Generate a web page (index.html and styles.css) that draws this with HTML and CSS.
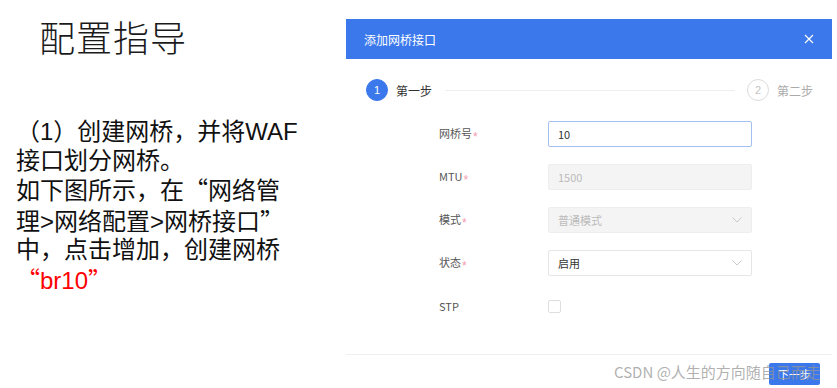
FILE: index.html
```html
<!DOCTYPE html>
<html lang="zh-CN">
<head>
<meta charset="utf-8">
<title>配置指导</title>
<link rel="stylesheet" href="styles.css">
</head>
<body>
<div class="page">
  <section class="guide">
    <h1 class="guide-title">配置指导</h1>
    <p class="guide-text">（1）创建网桥，并将WAF<br>接口划分网桥。<br>如下图所示，在<span class="q">“</span>网络管<br>理&gt;网络配置&gt;网桥接口<span class="q">”</span><br>中，点击增加，创建网桥<br><span class="red"><span class="q">“</span>br10<span class="q">”</span></span></p>
  </section>
  <section class="dialog">
    <header class="dlg-head">
      <span class="dlg-title">添加网桥接口</span>
      <svg class="dlg-close" width="10" height="10" viewBox="0 0 10 10"><path d="M1 1L9 9M9 1L1 9" stroke="#fff" stroke-width="1.2" fill="none"/></svg>
    </header>
    <div class="steps">
      <span class="step-dot active">1</span>
      <span class="step-label">第一步</span>
      <span class="step-line"></span>
      <span class="step-dot">2</span>
      <span class="step-label muted">第二步</span>
    </div>
    <div class="form">
      <div class="row">
        <span class="label">网桥号<i class="req">*</i></span>
        <div class="control focus">10</div>
      </div>
      <div class="row">
        <span class="label">MTU<i class="req">*</i></span>
        <div class="control disabled">1500</div>
      </div>
      <div class="row">
        <span class="label">模式<i class="req">*</i></span>
        <div class="control disabled select">普通模式<svg class="chev" width="10" height="6" viewBox="0 0 10 6"><path d="M0.5 0.5L5 5L9.5 0.5" stroke="#c8c8c8" fill="none"/></svg></div>
      </div>
      <div class="row">
        <span class="label">状态<i class="req">*</i></span>
        <div class="control select">启用<svg class="chev" width="10" height="6" viewBox="0 0 10 6"><path d="M0.5 0.5L5 5L9.5 0.5" stroke="#c8c8c8" fill="none"/></svg></div>
      </div>
      <div class="row">
        <span class="label">STP</span>
        <span class="checkbox"></span>
      </div>
    </div>
    <footer class="dlg-foot">
      <button class="btn-primary" type="button">下一步</button>
    </footer>
  </section>
</div>
<div class="watermark">CSDN @人生的方向随自己而走</div>
</body>
</html>
```
FILE: styles.css
```css
html, body {
  margin: 0;
  padding: 0;
  background: #fff;
}
body {
  width: 837px;
  height: 388px;
  overflow: hidden;
  position: relative;
  font-family: "Noto Sans CJK SC", "Liberation Sans", sans-serif;
}
.page {
  display: flex;
  align-items: flex-start;
}
.guide {
  width: 346px;
  flex: none;
}
.guide-title {
  margin: 16px 0 0 39px;
  font-size: 36px;
  line-height: 40px;
  font-weight: 300;
  color: #1a1a1a;
  letter-spacing: 1px;
}
.guide-text {
  margin: 62px 0 0 16px;
  font-family: "Liberation Sans", "Noto Sans CJK SC", sans-serif;
  font-size: 24px;
  line-height: 28.6px;
  color: #111;
}
.q {
  font-family: "Noto Sans CJK SC", sans-serif;
}
.red {
  color: #f00;
}
.dialog {
  margin-top: 19px;
  width: 486px;
  flex: none;
  background: #fff;
}
.dlg-head {
  height: 40px;
  background: #3a78ec;
  display: flex;
  align-items: center;
  justify-content: space-between;
  padding: 0 18px 0 18px;
  box-sizing: border-box;
}
.dlg-title {
  color: #fff;
  font-size: 12px;
  font-weight: 400;
}
.dlg-close {
  display: block;
}
.steps {
  display: flex;
  align-items: center;
  padding: 20px 19px 0 20px;
  height: 22px;
}
.step-dot {
  width: 22px;
  height: 22px;
  box-sizing: border-box;
  border-radius: 50%;
  border: 1px solid #dcdcdc;
  color: #c4c4c4;
  font-size: 11px;
  display: flex;
  align-items: center;
  justify-content: center;
  font-family: "Liberation Sans", sans-serif;
}
.step-dot.active {
  background: #3a78ec;
  border-color: #3a78ec;
  color: #fff;
}
.step-label {
  margin-left: 8px;
  font-size: 12px;
  color: #333;
}
.step-label.muted {
  color: #aaa;
}
.step-line {
  flex: 1;
  height: 1px;
  background: #eeeeee;
  margin: 0 12px 0 13px;
}
.form {
  padding: 20px 0 0 93px;
  display: flex;
  flex-direction: column;
  gap: 17px;
}
.row {
  display: flex;
  align-items: center;
  height: 26px;
}
.label {
  width: 109px;
  font-size: 11px;
  color: #555;
}
.req {
  font-style: normal;
  font-family: "Liberation Sans", sans-serif;
  font-size: 12px;
  color: #f59ab0;
  margin-left: 1px;
  vertical-align: -3px;
}
.control {
  width: 204px;
  height: 26px;
  box-sizing: border-box;
  border: 1px solid #e6e6e6;
  border-radius: 2px;
  padding: 0 9px;
  font-size: 11px;
  color: #333;
  display: flex;
  align-items: center;
  justify-content: space-between;
}
.control.focus {
  border-color: #a3bff2;
}
.control.disabled {
  background: #f4f4f4;
  color: #bbb;
  border-color: #eeeeee;
}
.chev {
  display: block;
}
.checkbox {
  width: 13px;
  height: 13px;
  box-sizing: border-box;
  border: 1px solid #dedede;
  border-radius: 2px;
}
.dlg-foot {
  margin-top: 35px;
  border-top: 1px solid #efefef;
  padding: 8px 12px 0 0;
  display: flex;
  justify-content: flex-end;
}
.btn-primary {
  width: 51px;
  height: 22px;
  border: none;
  border-radius: 2px;
  background: #3a78ec;
  color: #fff;
  font-size: 11px;
  font-family: "Noto Sans CJK SC", sans-serif;
  padding: 0;
}
.watermark {
  position: absolute;
  left: 614px;
  top: 362px;
  font-size: 15px;
  line-height: 20px;
  color: rgba(150, 150, 150, 0.75);
  white-space: nowrap;
}
```
